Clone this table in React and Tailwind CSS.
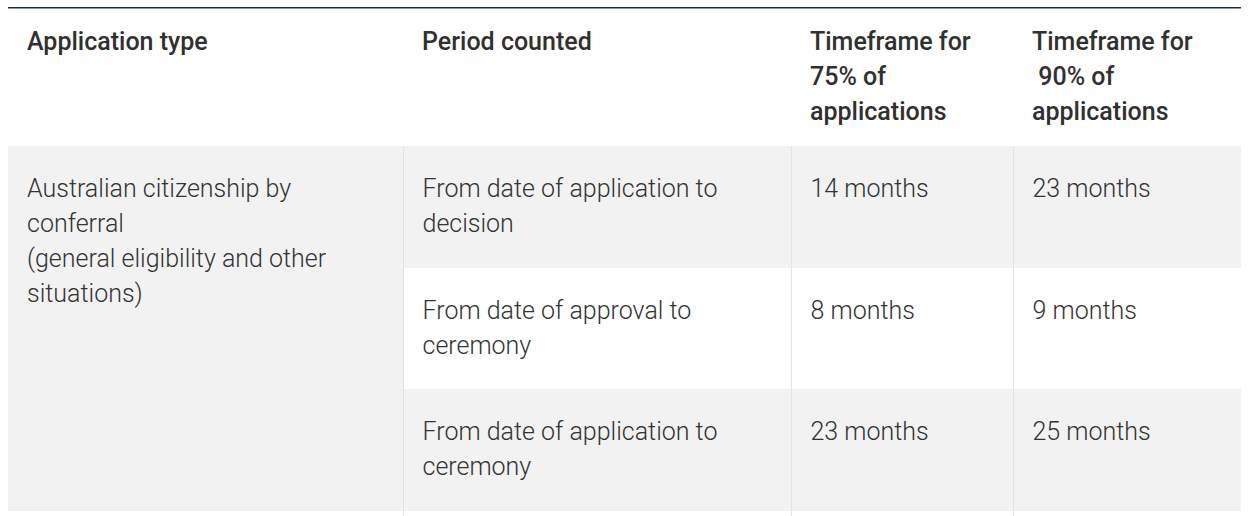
export default function App() {
  const cell = "align-top px-[19px] pt-[25px] pb-[26.5px]";
  const bord = "border-l border-[#e3e3e3]";
  const th = "text-left align-top px-[19px] pt-[15px] pb-[17px] font-medium whitespace-nowrap";
  return (
    <div className="px-[8px] pt-[7px] bg-white" style={{ fontFamily: "Roboto, 'Liberation Sans', sans-serif" }}>
      <div className="h-px bg-[#1e2a36]" />
      <div className="h-px bg-[#8798aa]" />
      <table className="w-[1233px] table-fixed border-collapse text-[25px] leading-[35px] text-[#333333]">
        <colgroup>
          <col className="w-[395px]" />
          <col className="w-[388px]" />
          <col className="w-[222px]" />
          <col className="w-[228px]" />
        </colgroup>
        <thead>
          <tr className="bg-white text-[#303030]">
            <th className={th}>Application type</th>
            <th className={th}>Period counted</th>
            <th className={th}>
              Timeframe for<br />75% of<br />applications
            </th>
            <th className={th}>
              Timeframe for<br />&nbsp;90% of<br />applications
            </th>
          </tr>
        </thead>
        <tbody className="font-light">
          <tr className="bg-[#f2f2f2]">
            <td rowSpan={3} className={`${cell} bg-[#f2f2f2] whitespace-nowrap`}>
              Australian citizenship by<br />conferral<br />(general eligibility and other<br />situations)
            </td>
            <td className={`${cell} ${bord} whitespace-nowrap`}>From date of application to<br />decision</td>
            <td className={`${cell} ${bord}`}>14 months</td>
            <td className={`${cell} ${bord}`}>23 months</td>
          </tr>
          <tr className="bg-white">
            <td className={`${cell} ${bord} whitespace-nowrap`}>From date of approval to<br />ceremony</td>
            <td className={`${cell} ${bord}`}>8 months</td>
            <td className={`${cell} ${bord}`}>9 months</td>
          </tr>
          <tr className="bg-[#f2f2f2]">
            <td className={`${cell} ${bord} whitespace-nowrap`}>From date of application to<br />ceremony</td>
            <td className={`${cell} ${bord}`}>23 months</td>
            <td className={`${cell} ${bord}`}>25 months</td>
          </tr>
          <tr className="bg-white h-[40px]">
            <td className="p-0"></td>
            <td className={`p-0 ${bord}`}></td>
            <td className={`p-0 ${bord}`}></td>
            <td className={`p-0 ${bord}`}></td>
          </tr>
        </tbody>
      </table>
    </div>
  );
}
